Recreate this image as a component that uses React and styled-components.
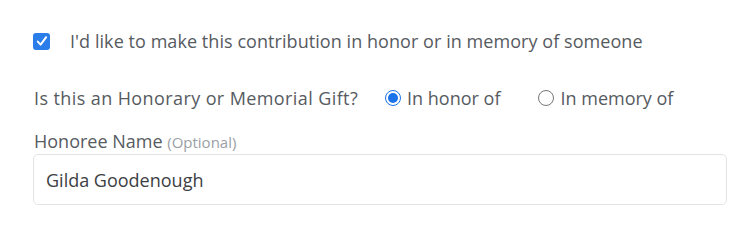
import React, { useState } from 'react';
import styled, { createGlobalStyle } from 'styled-components';

const GlobalStyle = createGlobalStyle`
  body {
    margin: 0;
    background: #fff;
    font-family: "Open Sans", "Noto Sans", sans-serif;
  }
`;

const Form = styled.div`
  padding: 30px 23px 0 33px;
  display: flex;
  flex-direction: column;
  color: #565b61;
  font-size: 18px;
`;

const CheckRow = styled.label`
  display: flex;
  align-items: center;
  gap: 20px;
  height: 22px;
  margin-bottom: 35px;
  letter-spacing: 0.06px;
`;

const CheckBox = styled.span`
  width: 17px;
  height: 17px;
  border-radius: 3px;
  background: #2b7de9;
  display: flex;
  align-items: center;
  justify-content: center;
  flex-shrink: 0;
`;

const QuestionRow = styled.div`
  display: flex;
  align-items: center;
  height: 22px;
  margin-bottom: 22px;
  padding-left: 1px;
`;

const Question = styled.span`
  margin-right: 27px;
  letter-spacing: 0.4px;
`;

const RadioOption = styled.label`
  display: flex;
  align-items: center;
  gap: 6px;
  margin-right: 38px;
  cursor: pointer;
`;

const RadioDot = styled.span`
  width: 16px;
  height: 16px;
  box-sizing: border-box;
  border-radius: 50%;
  border: 1px solid ${p => (p.$checked ? '#1a73e8' : '#767676')};
  display: flex;
  align-items: center;
  justify-content: center;

  &::after {
    content: '';
    width: 10px;
    height: 10px;
    border-radius: 50%;
    background: ${p => (p.$checked ? '#1a73e8' : 'transparent')};
  }
`;

const FieldLabel = styled.div`
  height: 20px;
  line-height: 20px;
  margin-bottom: 3px;
  padding-left: 1px;
`;

const Optional = styled.span`
  color: #9aa0a6;
  font-size: 15px;
`;

const TextInput = styled.input`
  box-sizing: border-box;
  width: 100%;
  height: 51px;
  border: 1px solid #e3e3e3;
  border-radius: 5px;
  padding: 0 12px;
  font: inherit;
  color: #3c4043;
  outline: none;
`;

export default function App() {
  const [gift, setGift] = useState('honor');
  const [name, setName] = useState('Gilda Goodenough');

  return (
    <>
      <GlobalStyle />
      <Form>
        <CheckRow>
          <CheckBox>
            <svg width="12" height="12" viewBox="0 0 12 12" fill="none">
              <path d="M1.8 6.6 L4.6 9.6 L10.2 2.2" stroke="#fff" strokeWidth="2" strokeLinecap="round" strokeLinejoin="round" />
            </svg>
          </CheckBox>
          I'd like to make this contribution in honor or in memory of someone
        </CheckRow>
        <QuestionRow>
          <Question>Is this an Honorary or Memorial Gift?</Question>
          <RadioOption onClick={() => setGift('honor')}>
            <RadioDot $checked={gift === 'honor'} />
            In honor of
          </RadioOption>
          <RadioOption onClick={() => setGift('memory')}>
            <RadioDot $checked={gift === 'memory'} />
            In memory of
          </RadioOption>
        </QuestionRow>
        <FieldLabel>
          Honoree Name <Optional>(Optional)</Optional>
        </FieldLabel>
        <TextInput value={name} onChange={e => setName(e.target.value)} />
      </Form>
    </>
  );
}
